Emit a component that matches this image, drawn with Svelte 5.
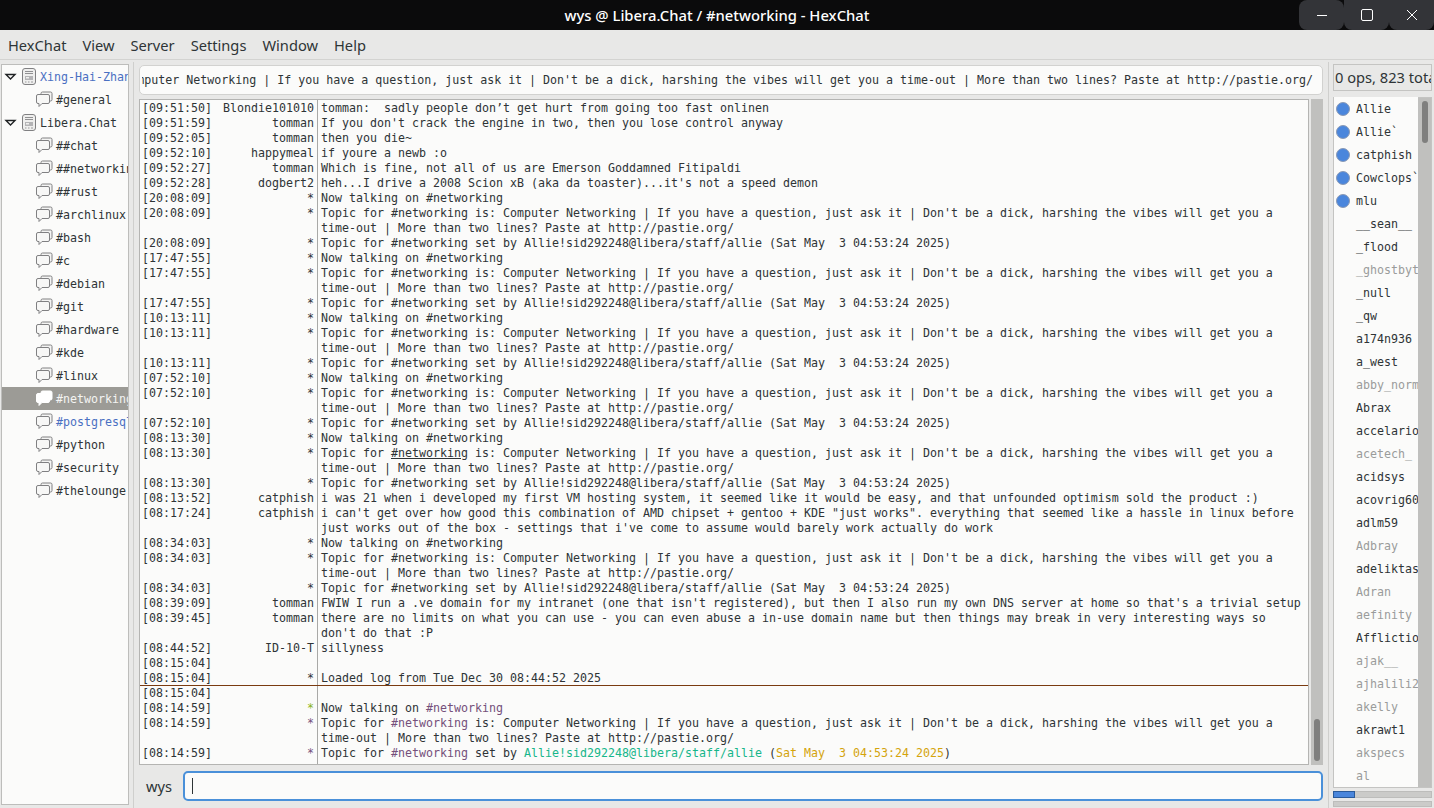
<script lang="ts">
	const chans = ['##chat', '##networking', '##rust', '#archlinux', '#bash', '#c', '#debian', '#git', '#hardware', '#kde', '#linux', '#networking', '#postgresql', '#python', '#security', '#thelounge'];

	const ops = ['Allie', 'Allie`', 'catphish', 'Cowclops`', 'mlu'];
	const users: [string, boolean][] = [
		['__sean__', false], ['_flood', false], ['_ghostbyte', true], ['_null', false], ['_qw', false],
		['a174n936', false], ['a_west', false], ['abby_norman', true], ['Abrax', false], ['accelarion', false],
		['acetech_', true], ['acidsys', false], ['acovrig60', false], ['adlm59', false], ['Adbray', true],
		['adeliktas', false], ['Adran', true], ['aefinity', true], ['Afflictio', false], ['ajak__', true],
		['ajhalili2', true], ['akelly', true], ['akrawt1', false], ['akspecs', true], ['al', true]
	];

	const topicA = `Topic for #networking is: Computer Networking | If you have a question, just ask it | Don't be a dick, harshing the vibes will get you a`;
	const topicB = 'time-out | More than two lines? Paste at http://pastie.org/';
	const setBy = 'Topic for #networking set by Allie!sid292248@libera/staff/allie (Sat May  3 04:53:24 2025)';

	type Row = { t: string; n: string; m: string };
	const r = (t: string, n: string, m: string): Row => ({ t, n, m });

	function block(t: string): Row[] {
		return [r(t, '*', 'Now talking on #networking'), r(t, '*', topicA), r('', '', topicB), r(t, '*', setBy)];
	}

	const rows: Row[] = [
		r('09:51:50', 'Blondie101010', `tomman:  sadly people don’t get hurt from going too fast onlinen`),
		r('09:51:59', 'tomman', `If you don't crack the engine in two, then you lose control anyway`),
		r('09:52:05', 'tomman', 'then you die~'),
		r('09:52:10', 'happymeal', 'if youre a newb :o'),
		r('09:52:27', 'tomman', 'Which is fine, not all of us are Emerson Goddamned Fitipaldi'),
		r('09:52:28', 'dogbert2', `heh...I drive a 2008 Scion xB (aka da toaster)...it's not a speed demon`),
		...block('20:08:09'),
		...block('17:47:55'),
		...block('10:13:11'),
		...block('07:52:10'),
		...block('08:13:30'),
		r('08:13:52', 'catphish', 'i was 21 when i developed my first VM hosting system, it seemed like it would be easy, and that unfounded optimism sold the product :)'),
		r('08:17:24', 'catphish', `i can't get over how good this combination of AMD chipset + gentoo + KDE "just works". everything that seemed like a hassle in linux before`),
		r('', '', `just works out of the box - settings that i've come to assume would barely work actually do work`),
		...block('08:34:03'),
		r('08:39:09', 'tomman', `FWIW I run a .ve domain for my intranet (one that isn't registered), but then I also run my own DNS server at home so that's a trivial setup`),
		r('08:39:45', 'tomman', 'there are no limits on what you can use - you can even abuse a in-use domain name but then things may break in very interesting ways so'),
		r('', '', `don't do that :P`),
		r('08:44:52', 'ID-10-T', 'sillyness'),
		r('08:15:04', '', ''),
		r('08:15:04', '*', 'Loaded log from Tue Dec 30 08:44:52 2025')
	];

	const linkRow = 23; // the row with the hovered, underlined channel
</script>

<div class="window">
	<header class="titlebar">
		<span class="title">wys @ Libera.Chat / #networking - HexChat</span>
		<div class="winbtns">
			<button class="winbtn" aria-label="Minimize"><svg width="16" height="16" viewBox="0 0 16 16"><path d="M3 8.500h10" stroke="#fff" stroke-width="1" /></svg></button>
			<button class="winbtn" aria-label="Maximize"><svg width="16" height="16" viewBox="0 0 16 16"><rect x="2.500" y="2.500" width="11" height="11" rx="1.500" fill="none" stroke="#fff" /></svg></button>
			<button class="winbtn" aria-label="Close"><svg width="16" height="16" viewBox="0 0 16 16"><path d="M3 3l10 10M13 3L3 13" stroke="#fff" /></svg></button>
		</div>
	</header>

	<nav class="menubar">
		{#each ['HexChat', 'View', 'Server', 'Settings', 'Window', 'Help'] as item}
			<span class="menuitem">{item}</span>
		{/each}
	</nav>

	<main class="body">
		<aside class="tree">
			{@render server('Xing-Hai-Zhang', true)}
			{@render channel('#general', '')}
			{@render server('Libera.Chat', false)}
			{#each chans as c}
				{@render channel(c, c === '#networking' ? 'selected' : c === '#postgresql' ? 'blue' : '')}
			{/each}
		</aside>

		<div class="vsep"></div>

		<section class="center">
			<div class="topic"><div class="topicclip"><span>mputer Networking | If you have a question, just ask it | Don't be a dick, harshing the vibes will get you a time-out | More than two lines? Paste at http://pastie.org/</span></div></div>

			<div class="chatwrap">
				<div class="chat">
					<div class="log">
						{#each rows as row, i}
							<div class="row">
								<span class="time">{row.t ? `[${row.t}]` : ''}</span>
								<span class="nick">{row.n}</span>
								{#if i === linkRow}
									<span class="msg">Topic for <u>#networking</u> is: Computer Networking | If you have a question, just ask it | Don't be a dick, harshing the vibes will get you a</span>
								{:else}
									<span class="msg">{row.m}</span>
								{/if}
							</div>
						{/each}
					</div>
					<div class="marker"></div>
					<div class="log">
						<div class="row"><span class="time">[08:15:04]</span><span class="nick"></span><span class="msg"></span></div>
						<div class="row"><span class="time">[08:14:59]</span><span class="nick green">*</span><span class="msg">Now talking on <span class="purple">#networking</span></span></div>
						<div class="row"><span class="time">[08:14:59]</span><span class="nick purple">*</span><span class="msg">Topic for <span class="purple">#networking</span> is: Computer Networking | If you have a question, just ask it | Don't be a dick, harshing the vibes will get you a</span></div>
						<div class="row"><span class="time"></span><span class="nick"></span><span class="msg">{topicB}</span></div>
						<div class="row"><span class="time">[08:14:59]</span><span class="nick purple">*</span><span class="msg">Topic for <span class="purple">#networking</span> set by <span class="teal">Allie!sid292248@libera/staff/allie</span> (<span class="gold">Sat May  3 04:53:24 2025</span>)</span></div>
					</div>
				</div>
				<div class="scroll chatscroll"><div class="thumb"></div></div>
			</div>

			<div class="inputrow">
				<span class="nickname">wys</span>
				<div class="entry"><span class="caret"></span></div>
			</div>
		</section>

		<div class="vsep right"></div>

		<aside class="users">
			<div class="count"><span>0 ops, 823 total</span></div>
			<div class="userwrap">
				<div class="userlist">
					{#each ops as u}
						<div class="user"><span class="dot"></span><span class="uname">{u}</span></div>
					{/each}
					{#each users as [u, away]}
						<div class="user"><span class="nodot"></span><span class="uname" class:away>{u}</span></div>
					{/each}
				</div>
				<div class="scroll userscroll"><div class="thumb"></div></div>
			</div>
			<div class="lag"><div class="lagfill"></div></div>
			<div class="lag queue"></div>
		</aside>
	</main>
</div>

{#snippet server(name: string, blue: boolean)}
	<div class="node">
		<svg class="arrow" width="13" height="12" viewBox="0 0 13 12"><path d="M2 3.500h9l-4.500 4.500z" fill="none" stroke="#1f2224" stroke-width="1.400" /></svg>
		<svg class="srv" width="16" height="17" viewBox="0 0 16 17">
			<rect x="1.500" y="0.500" width="13" height="16" rx="2.500" fill="#efefee" stroke="#808082" />
			<path d="M4 3.500h8M4 5.500h8" stroke="#909092" />
			<rect x="4" y="8" width="8" height="4" fill="#b4b4b6" />
			<rect x="5" y="9" width="3" height="1.500" fill="#efefee" />
			<path d="M4 14h1.500M7 14h1.500M10 14h2" stroke="#9a9a9c" />
		</svg>
		<span class="label" class:blue>{name}</span>
	</div>
{/snippet}

{#snippet channel(name: string, cls: string)}
	{@const line = cls === 'selected' ? '#fff' : '#808082'}
	<div class="node chan {cls}">
		<svg class="bubble" width="17" height="17" viewBox="0 0 17 17">
			<path d="M5 3V2.500a1.500 1.500 0 0 1 1.500-1.500h8a1.500 1.500 0 0 1 1.500 1.500v6a1.500 1.500 0 0 1-1.500 1.500H14" fill={cls === 'selected' ? '#fff' : '#f4f4f3'} stroke={line} />
			<path d="M2 3.500h10a1.500 1.500 0 0 1 1.500 1.500v6a1.500 1.500 0 0 1-1.500 1.500H6l-3 3v-3H2a1.500 1.500 0 0 1-1.500-1.500V5A1.500 1.500 0 0 1 2 3.500z" fill={cls === 'selected' ? '#fff' : '#f7f7f6'} stroke={line} />
		</svg>
		<span class="label">{name}</span>
	</div>
{/snippet}

<style>
	:global(body) {
		margin: 0;
		background: #e8e8e7;
		overflow: hidden;
	}

	.window {
		width: 1434px;
		height: 808px;
		display: flex;
		flex-direction: column;
		font-family: "Noto Sans", sans-serif;
		color: #2e3436;
		background: #e8e8e7;
	}

	.titlebar {
		height: 30px;
		flex: none;
		background: #0b0b0c;
		display: flex;
		justify-content: center;
		align-items: center;
		position: relative;
	}

	.title {
		color: #fff;
		font-size: 14.8px;
		font-weight: 500;
	}

	.winbtns {
		position: absolute;
		right: 0;
		top: 0;
		display: flex;
	}

	.winbtn {
		width: 45px;
		height: 30px;
		border: 0;
		padding: 0;
		background: #333438;
		border-radius: 0 0 8px 8px;
		display: flex;
		align-items: center;
		justify-content: center;
	}

	.winbtn:first-child {
		border-radius: 8px;
	}

	.menubar {
		height: 30px;
		flex: none;
		display: flex;
		gap: 16px;
		padding-left: 8px;
		align-items: center;
		font-size: 14.67px;
		border-bottom: 1px solid #d3d3d1;
		box-sizing: border-box;
	}

	.body {
		flex: 1;
		display: flex;
		min-height: 0;
	}

	.tree {
		width: 128px;
		margin: 4px 0 3px 1px;
		flex: none;
		background: #fbfbfa;
		border: 1px solid #bdbdbb;
		box-sizing: border-box;
		overflow: hidden;
		font-family: "DejaVu Sans Mono", monospace;
	}

	.node {
		height: 23px;
		display: flex;
		align-items: center;
		white-space: nowrap;
		overflow: hidden;
	}

	.arrow {
		margin-left: 2px;
		flex: none;
	}

	.srv {
		margin-left: 4px;
		margin-right: 3px;
		flex: none;
	}

	.chan {
		padding-left: 34px;
	}

	.bubble {
		margin-right: 3px;
		flex: none;
	}

	.label {
		font-size: 11.635px;
	}

	.blue .label, .label.blue {
		color: #4a70c2;
	}

	.selected {
		background: #9c9b96;
		color: #f4f4f2;
	}

	.vsep {
		width: 1px;
		margin: 2px 5px 0 4px;
		background: #cfcfcd;
		flex: none;
	}

	.vsep.right {
		margin: 2px 4px 0 5px;
	}

	.center {
		width: 1184px;
		flex: none;
		display: flex;
		flex-direction: column;
	}

	.topic {
		margin-top: 5px;
		height: 30px;
		box-sizing: border-box;
		background: #fbfbfa;
		border: 1px solid #d2d2d0;
		border-radius: 5px;
		display: flex;
		align-items: center;
		padding: 0 9px 0 2px;
		font: 11.635px "DejaVu Sans Mono", monospace;
	}

	.topicclip {
		flex: 1;
		min-width: 0;
		overflow: hidden;
		white-space: pre;
		display: flex;
		justify-content: flex-end;
	}

	.chatwrap {
		margin-top: 4px;
		height: 666px;
		display: flex;
		gap: 2px;
	}

	.chat {
		flex: 1;
		background: #fbfbfa;
		border: 1px solid #b4b4b2;
		box-sizing: border-box;
		overflow: hidden;
		font: 11.635px/15px "DejaVu Sans Mono", monospace;
		padding-top: 1px;
		background-image: linear-gradient(#a9a9a7, #a9a9a7);
		background-size: 1px 100%;
		background-position: 177px 0;
		background-repeat: no-repeat;
	}

	.row {
		height: 15px;
		display: flex;
		white-space: pre;
	}

	.time {
		width: 80px;
		padding-left: 2px;
		flex: none;
	}

	.nick {
		width: 92px;
		flex: none;
		text-align: right;
	}

	.msg {
		padding-left: 7px;
	}

	.marker {
		height: 1px;
		margin-top: -1px;
		background: #7a3b10;
		position: relative;
	}

	.green { color: #8ab320; }
	.purple { color: #75507b; }
	.teal { color: #16b68a; }
	.gold { color: #d4a40c; }

	.scroll {
		width: 12px;
		background: #c0c0be;
		position: relative;
		flex: none;
	}

	.thumb {
		position: absolute;
		left: 3px;
		width: 6px;
		border-radius: 3px;
		background: #7f7f7e;
	}

	.chatscroll .thumb {
		top: 620px;
		height: 42px;
	}

	.inputrow {
		flex: 1;
		display: flex;
		align-items: center;
		padding-bottom: 1px;
	}

	.nickname {
		width: 44px;
		padding-left: 7px;
		box-sizing: border-box;
		font-size: 14.67px;
	}

	.entry {
		flex: 1;
		height: 30px;
		box-sizing: border-box;
		border: 2px solid #4a90d9;
		border-radius: 5px;
		background: #fbfbfa;
		display: flex;
		align-items: center;
		padding-left: 7px;
	}

	.caret {
		width: 1px;
		height: 16px;
		background: #2e3436;
	}

	.users {
		width: 99px;
		flex: none;
		display: flex;
		flex-direction: column;
	}

	.count {
		margin-top: 4px;
		height: 27px;
		border: 1px solid #c4c4c2;
		box-sizing: border-box;
		overflow: hidden;
		white-space: nowrap;
		font-size: 14.67px;
		line-height: 25px;
		padding-left: 1px;
	}

	.userwrap {
		margin-top: 6px;
		height: 691px;
		display: flex;
		border: 1px solid #c4c4c2;
		box-sizing: border-box;
	}

	.userlist {
		flex: 1;
		min-width: 0;
		background: #fbfbfa;
		overflow: hidden;
		font: 11.635px "DejaVu Sans Mono", monospace;
		margin-top: -1px;
	}

	.user {
		height: 23px;
		display: flex;
		align-items: center;
		white-space: nowrap;
	}

	.dot {
		width: 14px;
		height: 14px;
		margin-left: 2px;
		border-radius: 50%;
		background: #4a86dc;
		border: 1px solid #8a9ab5;
		box-sizing: border-box;
		flex: none;
	}

	.nodot {
		width: 14px;
		margin-left: 2px;
		flex: none;
	}

	.uname {
		margin-left: 6px;
	}

	.away {
		color: #9a9c9b;
	}

	.userscroll {
		width: 13px;
	}

	.userscroll .thumb {
		top: 3px;
		left: 4px;
		height: 42px;
	}

	.lag {
		height: 7px;
		margin-top: 3px;
		background: #cbcbc9;
		border: 1px solid #bdbdbb;
		box-sizing: border-box;
	}

	.lagfill {
		width: 20px;
		height: 5px;
		background: #4a86dc;
		outline: 1px solid #2a5a9a;
	}

	.queue {
		height: 6px;
	}
</style>
